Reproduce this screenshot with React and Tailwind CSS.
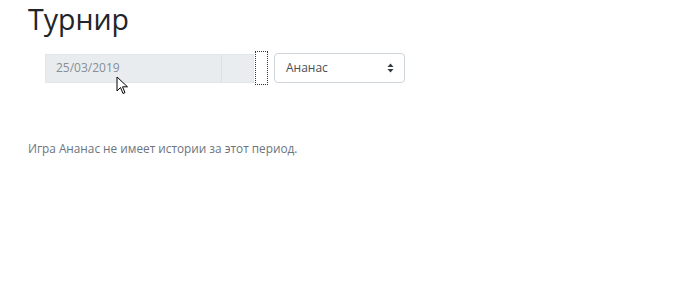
import React from "react";

export default function App() {
  return (
    <div className="relative w-[700px] h-[293px] bg-white overflow-hidden" style={{ fontFamily: '"Open Sans", "Noto Sans", sans-serif' }}>
      <div className="pl-[28px] pt-[0px]">
        <h1 className="text-[28.5px] leading-[39px] text-[#212529] font-normal">Турнир</h1>
        <div className="flex items-center mt-[12px] ml-[17px]">
          <div className="flex h-[29px] w-[209px] border border-[#e3e6e9] bg-[#e9ecef]">
            <div className="flex-1 flex items-center pl-[10px] text-[12px] text-[#868e96]">25/03/2019</div>
            <div className="w-[32px] border-l border-[#dde1e5] bg-[#eaedf0]"></div>
          </div>
          <div className="w-[13px] h-[34px] border border-dotted border-[#333] ml-[1px]"></div>
          <div className="ml-[6px] flex items-center justify-between w-[131px] h-[30px] border border-[#ced4da] rounded-[4px] bg-white pl-[11px] pr-[10px] text-[12px] text-[#495057]">
            <span>Ананас</span>
            <svg width="7" height="10" viewBox="0 0 7 10">
              <path d="M3.5 0.5 L6.5 4 L0.5 4 Z" fill="#343a40" />
              <path d="M3.5 9.5 L6.5 6 L0.5 6 Z" fill="#343a40" />
            </svg>
          </div>
        </div>
        <p className="mt-[55px] text-[11.8px] text-[#6c757d]">Игра Ананас не имеет истории за этот период.</p>
      </div>
      <svg className="absolute left-[116px] top-[76px]" width="13" height="19" viewBox="0 0 13 19">
        <path d="M1 1 L1 15 L4.5 11.5 L7 17.5 L9 16.5 L6.5 10.8 L11.5 10.8 Z" fill="#fff" stroke="#000" strokeWidth="1" strokeLinejoin="miter" />
      </svg>
    </div>
  );
}
